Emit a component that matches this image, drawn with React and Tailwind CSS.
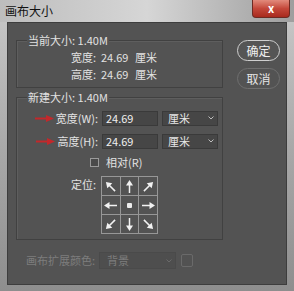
import React from 'react';

const font = { fontFamily: '"Noto Sans CJK SC", "Noto Sans", sans-serif' };

function RedArrow() {
  return (
    <svg width="19" height="7" viewBox="0 0 19 7" className="mr-[2px] shrink-0">
      <path d="M0 3.5 H13" stroke="#c3282b" strokeWidth="2" />
      <path d="M11 0 L19 3.5 L11 7 Z" fill="#c3282b" />
    </svg>
  );
}

// arrow pointing toward a compass direction, centre dot for 'c'
function Cell({ dir }) {
  const rot = { n: 0, ne: 45, e: 90, se: 135, s: 180, sw: 225, w: 270, nw: 315 }[dir];
  return (
    <div className="h-[19px] border-[#979797] border-r border-b flex items-center justify-center">
      {dir === 'c' ? (
        <div className="w-[5px] h-[5px] bg-[#ececec] rounded-[1px]" />
      ) : (
        <svg width="15" height="15" viewBox="0 0 15 15" style={{ transform: `rotate(${rot}deg)` }}>
          <path d="M7.5 14 V5" stroke="#f2f2f2" strokeWidth="1.5" />
          <path d="M7.5 1 L11 6.5 L4 6.5 Z" fill="#f2f2f2" />
        </svg>
      )}
    </div>
  );
}

function UnitSelect() {
  return (
    <div className="w-[56px] h-[15px] bg-[#464646] border border-[#3a3a3a] flex items-center justify-between pl-[5px] pr-[3px] text-[11px] text-[#e6e6e6]">
      <span>厘米</span>
      <svg width="6" height="4" viewBox="0 0 6 4"><path d="M0.5 0.5 L3 3 L5.5 0.5" stroke="#bdbdbd" fill="none" /></svg>
    </div>
  );
}

function SizeRow({ label }) {
  return (
    <div className="grid grid-cols-[81px_56px_56px] gap-x-[4px] items-center h-[15px]">
      <div className="flex items-center justify-end text-[11px] text-[#e2e2e2]">
        <RedArrow />
        <span>{label}</span>
      </div>
      <div className="h-[15px] bg-[#464646] border border-[#3a3a3a] flex items-center pl-[3px] text-[11px] text-[#f0f0f0]">24.69</div>
      <UnitSelect />
    </div>
  );
}

function InfoRow({ label }) {
  return (
    <div className="grid grid-cols-[79px_39px_auto] items-center h-[16px] text-[11px] text-[#e2e2e2]">
      <span className="text-right">{label}</span>
      <span className="pl-[5px]">24.69</span>
      <span>厘米</span>
    </div>
  );
}

export default function App() {
  return (
    <div className="w-[294px] h-[291px] flex flex-col bg-gradient-to-b from-[#c9c9c9] via-[#a9a9a9] to-[#8e8e8e] overflow-hidden" style={font}>
      {/* title bar */}
      <div className="h-[22px] flex items-start justify-between bg-gradient-to-r from-[#bdbdbd] via-[#d6d6d6] to-[#9e9e9e]">
        <span className="ml-[5px] mt-[4px] text-[12px] leading-[14px] text-[#111]">画布大小</span>
        <div className="mr-[4px] w-[38px] h-[18px] rounded-b-[4px] bg-gradient-to-b from-[#e28a7c] via-[#c4473a] to-[#a8291d] border border-[#6e2a22] border-t-0 flex items-center justify-center text-white text-[11px] font-bold leading-none">x</div>
      </div>

      {/* dialog body */}
      <div className="mx-[7px] mb-[6px] flex-1 bg-[#535353] border border-[#3d3d3d] flex pl-[8px] pt-[17px]">
        <div className="flex flex-col w-[207px]">
          {/* current size */}
          <div className="relative h-[48px] border border-[#414141] shadow-[inset_1px_1px_0_#5e5e5e] flex flex-col pt-[8px]">
            <span className="absolute -top-[8px] left-[10px] px-[1px] bg-[#535353] text-[11px] leading-[15px] text-[#e2e2e2]">当前大小: 1.40M</span>
            <InfoRow label="宽度:" />
            <div className="mt-[1px]"><InfoRow label="高度:" /></div>
          </div>

          {/* new size */}
          <div className="relative mt-[9px] h-[143px] border border-[#414141] shadow-[inset_1px_1px_0_#5e5e5e] flex flex-col pt-[12px]">
            <span className="absolute -top-[8px] left-[10px] px-[1px] bg-[#535353] text-[11px] leading-[15px] text-[#e2e2e2]">新建大小: 1.40M</span>
            <SizeRow label="宽度(W):" />
            <div className="mt-[8px]"><SizeRow label="高度(H):" /></div>
            <div className="mt-[9px] h-[11px] flex items-center pl-[73px] text-[11px] leading-[11px] text-[#e2e2e2]">
              <div className="w-[9px] h-[9px] border border-[#9a9a9a] bg-[#4a4a4a]" />
              <span className="ml-[7px]">相对(R)</span>
            </div>
            <div className="mt-[8px] grid grid-cols-[79px_57px] gap-x-[5px] items-start">
              <span className="text-right text-[11px] leading-[15px] mt-[1px] text-[#e2e2e2]">定位:</span>
              <div className="grid grid-cols-3 border-l border-t border-[#979797]">
                <Cell dir="nw" />
                <Cell dir="n" />
                <Cell dir="ne" />
                <Cell dir="w" />
                <Cell dir="c" />
                <Cell dir="e" />
                <Cell dir="sw" />
                <Cell dir="s" />
                <Cell dir="se" />
              </div>
            </div>
          </div>

          {/* extension colour */}
          <div className="mt-[12px] grid grid-cols-[79px_77px_13px] gap-x-[4px] items-center text-[11px] text-[#7d7d7d]">
            <span className="text-right">画布扩展颜色:</span>
            <div className="h-[17px] bg-[#4e4e4e] border border-[#4a4a4a] flex items-center justify-between pl-[7px] pr-[3px]">
              <span>背景</span>
              <svg width="6" height="4" viewBox="0 0 6 4"><path d="M0.5 0.5 L3 3 L5.5 0.5" stroke="#6a6a6a" fill="none" /></svg>
            </div>
            <div className="ml-[1px] h-[13px] border border-[#6a6a6a] rounded-[2px] bg-[#525252]" />
          </div>
        </div>

        {/* buttons */}
        <div className="ml-[14px] flex flex-col">
          <button className="w-[43px] h-[21px] rounded-full border-[1.5px] border-[#cfcfcf] bg-[#555] text-[12px] text-[#f0f0f0] leading-none">确定</button>
          <button className="mt-[7px] w-[43px] h-[21px] rounded-full border border-[#6f6f6f] bg-[#535353] text-[12px] text-[#e6e6e6] leading-none">取消</button>
        </div>
      </div>
    </div>
  );
}
